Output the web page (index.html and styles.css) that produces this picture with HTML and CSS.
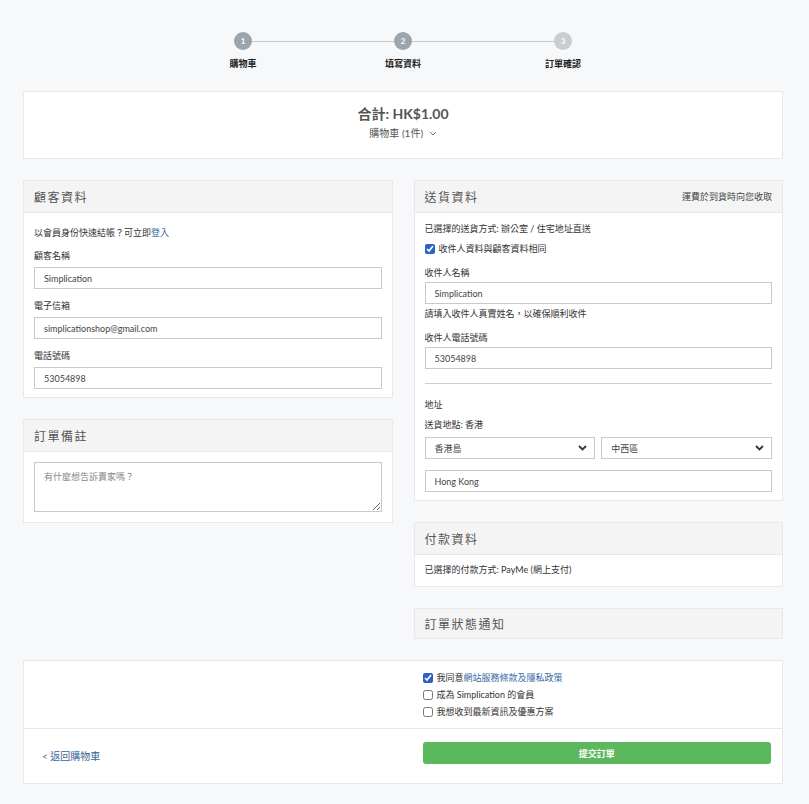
FILE: index.html
```html
<!DOCTYPE html>
<html lang="zh-Hant">
<head>
    <meta charset="UTF-8">
    <meta name="viewport" content="width=device-width, initial-scale=1.0">
    <title>結帳</title>
    <link rel="stylesheet" href="styles.css">
</head>
<body>
    <div class="page">
        <!-- progress steps -->
        <div class="steps">
            <div class="step done"><span class="dot">1</span><span class="step-name">購物車</span></div>
            <div class="step done"><span class="dot">2</span><span class="step-name">填寫資料</span></div>
            <div class="step"><span class="dot">3</span><span class="step-name">訂單確認</span></div>
        </div>

        <div class="card summary">
            <div class="total">合計: HK$1.00</div>
            <div class="cart-toggle">購物車 (1件)
                <svg width="8" height="5" viewBox="0 0 8 5"><path d="M1 1l3 3 3-3" fill="none" stroke="#777" stroke-width="1"/></svg>
            </div>
        </div>

        <div class="columns">
            <div class="col">
                <div class="card">
                    <div class="card-head"><h3>顧客資料</h3></div>
                    <div class="card-body customer">
                        <p class="note">以會員身份快速結帳？可立即<a href="#">登入</a></p>
                        <div class="field">
                            <label>顧客名稱</label>
                            <input type="text" value="Simplication">
                        </div>
                        <div class="field">
                            <label>電子信箱</label>
                            <input type="text" value="simplicationshop@gmail.com">
                        </div>
                        <div class="field">
                            <label>電話號碼</label>
                            <input type="text" value="53054898">
                        </div>
                    </div>
                </div>

                <div class="card">
                    <div class="card-head"><h3>訂單備註</h3></div>
                    <div class="card-body remarks">
                        <textarea placeholder="有什麼想告訴賣家嗎？"></textarea>
                    </div>
                </div>
            </div>

            <div class="col">
                <div class="card">
                    <div class="card-head">
                        <h3>送貨資料</h3>
                        <span class="head-note">運費於到貨時向您收取</span>
                    </div>
                    <div class="card-body delivery">
                        <p class="note">已選擇的送貨方式: 辦公室 / 住宅地址直送</p>
                        <label class="check same"><input type="checkbox" checked> 收件人資料與顧客資料相同</label>
                        <label class="label recv-name">收件人名稱</label>
                        <input type="text" value="Simplication">
                        <p class="note hint">請填入收件人真實姓名，以確保順利收件</p>
                        <label class="label recv-phone">收件人電話號碼</label>
                        <input type="text" value="53054898">
                        <hr>
                        <p class="note">地址</p>
                        <p class="note area">送貨地點: 香港</p>
                        <div class="select-row">
                            <div class="select-wrap">
                                <select><option>香港島</option></select>
                                <svg width="9" height="6" viewBox="0 0 9 6"><path d="M1 1l3.5 3.5L8 1" fill="none" stroke="#333" stroke-width="1.8"/></svg>
                            </div>
                            <div class="select-wrap">
                                <select><option>中西區</option></select>
                                <svg width="9" height="6" viewBox="0 0 9 6"><path d="M1 1l3.5 3.5L8 1" fill="none" stroke="#333" stroke-width="1.8"/></svg>
                            </div>
                        </div>
                        <input type="text" class="city" value="Hong Kong">
                    </div>
                </div>

                <div class="card">
                    <div class="card-head"><h3>付款資料</h3></div>
                    <div class="card-body payment">
                        <p class="note">已選擇的付款方式: PayMe (網上支付)</p>
                    </div>
                </div>

                <div class="card">
                    <div class="card-head last"><h3>訂單狀態通知</h3></div>
                </div>
            </div>
        </div>

        <div class="card footer">
            <div class="footer-top">
                <div></div>
                <div class="agree">
                    <label class="check"><input type="checkbox" checked> 我同意<a href="#">網站服務條款及隱私政策</a></label>
                    <label class="check"><input type="checkbox"> 成為 Simplication 的會員</label>
                    <label class="check"><input type="checkbox"> 我想收到最新資訊及優惠方案</label>
                </div>
            </div>
            <div class="footer-bottom">
                <a href="#" class="back">&lt; 返回購物車</a>
                <div class="submit-wrap"><button class="submit">提交訂單</button></div>
            </div>
        </div>
    </div>
</body>
</html>
```

FILE: styles.css
```css
body {
    margin: 0;
    background-color: #f7f8fa;
    font-family: "Lato", "Noto Sans CJK TC", sans-serif;
    color: #333;
}

a {
    color: #3767a3;
    text-decoration: none;
}

.page {
    width: 760px;
    margin: 0 0 0 23px;
    padding: 32px 0 20px;
}

/* steps */
.steps {
    display: flex;
    width: 480px;
    margin: 0 auto;
}

.step {
    flex: 1;
    display: flex;
    flex-direction: column;
    align-items: center;
    position: relative;
}

.step + .step::before {
    content: '';
    position: absolute;
    top: 9px;
    left: -50%;
    right: 50%;
    height: 1px;
    background-color: #c6c9cd;
}

.dot {
    position: relative;
    z-index: 1;
    width: 18px;
    height: 18px;
    border-radius: 50%;
    background-color: #c9ccd0;
    color: #fff;
    font-size: 8px;
    font-weight: bold;
    line-height: 18px;
    text-align: center;
}

.step.done .dot {
    background-color: #9ba5ad;
}

.step-name {
    margin-top: 8px;
    font-size: 9px;
    line-height: 12px;
    color: #222;
    font-weight: bold;
}

/* cards */
.card {
    background-color: #fff;
    border: 1px solid #e7e8ea;
    margin-bottom: 21px;
}

.summary {
    margin-top: 21px;
    height: 68px;
    box-sizing: border-box;
    padding-top: 13px;
    text-align: center;
}

.total {
    font-size: 14px;
    line-height: 18px;
    font-weight: bold;
    color: #555;
}

.cart-toggle {
    margin-top: 4px;
    font-size: 10px;
    line-height: 12px;
    color: #555;
}

.cart-toggle svg {
    margin-left: 3px;
    vertical-align: 1px;
}

.columns {
    display: grid;
    grid-template-columns: 1fr 1fr;
    column-gap: 21px;
}

.card-head {
    height: 31px;
    padding: 0 10px;
    display: flex;
    align-items: center;
    justify-content: space-between;
    background-color: #f4f4f5;
    border-bottom: 1px solid #e7e8ea;
}

.card-head.last {
    height: 29px;
    border-bottom: none;
}

.card-head h3 {
    margin: 0;
    font-size: 12px;
    font-weight: normal;
    letter-spacing: 1.5px;
    color: #555;
}

.head-note {
    font-size: 9px;
    color: #444;
}

.card-body {
    padding: 10px;
}

.note {
    margin: 0;
    font-size: 9px;
    line-height: 12px;
    color: #333;
}

.field {
    margin-top: 11px;
}

.field label, .label {
    display: block;
    font-size: 9px;
    line-height: 12px;
    color: #333;
    margin-bottom: 5px;
}

input[type="text"], select, textarea {
    display: block;
    width: 100%;
    height: 22px;
    box-sizing: border-box;
    padding: 0 9px;
    border: 1px solid #c9c9c9;
    border-radius: 0;
    background-color: #fff;
    font-family: "Lato", "Noto Sans CJK TC", sans-serif;
    font-size: 9px;
    color: #444;
}

.customer {
    padding: 14px 10px 8px;
}

.remarks {
    padding: 10px 10px 10px;
}

textarea {
    height: 50px;
    padding: 7px 9px;
    resize: vertical;
}

textarea::placeholder {
    color: #888;
}

.delivery {
    padding: 10px 10px 8px;
}

.check {
    display: flex;
    align-items: center;
    font-size: 9px;
    line-height: 17px;
    color: #333;
}

.check input {
    width: 10px;
    height: 10px;
    margin: 0 4px 0 0;
    accent-color: #2c63c1;
}

.same {
    margin-top: 5px;
}

.delivery .recv-name {
    margin-top: 10px;
    margin-bottom: 3px;
}

.delivery .hint {
    margin-top: 4px;
}

.delivery .recv-phone {
    margin-top: 12px;
    margin-bottom: 3px;
}

.delivery hr {
    border: none;
    border-top: 1px solid #cfcfcf;
    margin: 14px 0 15px;
}

.area {
    margin-top: 8px;
}

.select-row {
    display: flex;
    gap: 6px;
    margin-top: 6px;
}

.select-wrap {
    flex: 1;
    position: relative;
}

.select-wrap select {
    appearance: none;
    -webkit-appearance: none;
    padding: 0 9px;
}

.select-wrap svg {
    position: absolute;
    right: 8px;
    top: 8px;
    pointer-events: none;
}

.city {
    margin-top: 11px;
}

.payment {
    padding: 9px 10px 10px;
}

/* footer */
.footer-top, .footer-bottom {
    display: grid;
    grid-template-columns: 1fr 1fr;
    column-gap: 21px;
}

.footer-top {
    padding: 8px 0;
    border-bottom: 1px solid #e7e8ea;
}

.agree {
    padding-left: 9px;
}

.footer-bottom {
    padding: 13px 0 19px;
    align-items: center;
}

.back {
    padding-left: 18px;
    margin-top: 5px;
    font-size: 10px;
    color: #3b6494;
}

.submit-wrap {
    padding: 0 11px 0 9px;
}

.submit {
    display: block;
    width: 100%;
    height: 22px;
    border: none;
    border-radius: 3px;
    background-color: #5cb85c;
    color: #fff;
    font-family: "Lato", "Noto Sans CJK TC", sans-serif;
    font-size: 9px;
    font-weight: bold;
    cursor: pointer;
}
```
